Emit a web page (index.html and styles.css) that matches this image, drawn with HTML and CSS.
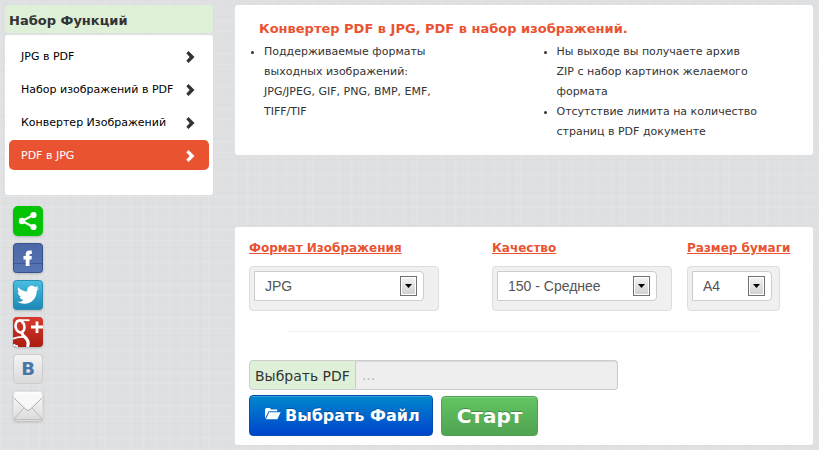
FILE: index.html
```
<!DOCTYPE html>
<html lang="ru">
<head>
    <meta charset="UTF-8">
    <meta name="viewport" content="width=device-width, initial-scale=1.0">
    <title>PDF в JPG</title>
    <link rel="stylesheet" href="styles.css">
</head>
<body>

<!-- Shared chevron and icon gradients -->
<svg class="defs" width="0" height="0" aria-hidden="true">
    <defs>
        <symbol id="chevron" viewBox="0 0 10 12">
            <path d="M2.5 0 L8.5 6 L2.5 12 L0.3 9.8 L3.7 6 L0.3 2.2 Z"/>
        </symbol>
        <linearGradient id="fbFill" x1="0" y1="0" x2="0" y2="1">
            <stop offset="0" stop-color="#4c68a6"/>
            <stop offset="1" stop-color="#5674b3"/>
        </linearGradient>
        <linearGradient id="twFill" x1="0" y1="0" x2="0" y2="1">
            <stop offset="0" stop-color="#48bfe0"/>
            <stop offset="1" stop-color="#1e86b4"/>
        </linearGradient>
        <linearGradient id="gpFill" x1="0" y1="0" x2="0" y2="1">
            <stop offset="0" stop-color="#d83a2c"/>
            <stop offset="1" stop-color="#a91d12"/>
        </linearGradient>
        <linearGradient id="grayFill" x1="0" y1="0" x2="0" y2="1">
            <stop offset="0" stop-color="#fdfdfd"/>
            <stop offset="1" stop-color="#dadada"/>
        </linearGradient>
    </defs>
</svg>

<div class="page">
    <aside class="sidebar">
        <h2 class="sidebar-title">Набор Функций</h2>
        <nav class="menu">
            <a href="#">JPG в PDF <svg class="chevron"><use href="#chevron"/></svg></a>
            <a href="#">Набор изображений в PDF <svg class="chevron"><use href="#chevron"/></svg></a>
            <a href="#">Конвертер Изображений <svg class="chevron"><use href="#chevron"/></svg></a>
            <a href="#" class="active">PDF в JPG <svg class="chevron"><use href="#chevron"/></svg></a>
        </nav>

        <div class="social">
            <a href="#" aria-label="Share">
                <svg viewBox="0 0 31 31">
                    <rect x="0" y="0" width="30" height="30" rx="5" fill="#05c405"/>
                    <path d="M20.5 9 L9 15 L20.5 21" fill="none" stroke="#fff" stroke-width="2.2"/>
                    <circle cx="20.5" cy="9" r="3.1" fill="#fff"/>
                    <circle cx="9" cy="15" r="3.2" fill="#fff"/>
                    <circle cx="20.5" cy="21" r="3.1" fill="#fff"/>
                </svg>
            </a>
            <a href="#" aria-label="Facebook">
                <svg viewBox="0 0 31 31">
                    <rect x="0.5" y="0.5" width="29" height="29" rx="3" fill="url(#fbFill)" stroke="#35528f"/>
                    <path d="M1 20.5 H29" stroke="#3c5796"/>
                    <path d="M12.7 23 V16.5 H10.5 V13 H12.7 V11.5 C12.7 8.8 14.2 7.6 16.3 7.6 H18.8 V11 H17.4 C16.7 11 16.5 11.4 16.5 12 V13 H18.8 L18.5 16.5 H16.5 V23 Z" fill="#fff"/>
                </svg>
            </a>
            <a href="#" aria-label="Twitter">
                <svg viewBox="0 0 31 31">
                    <rect x="0.5" y="0.5" width="29" height="29" rx="3" fill="url(#twFill)" stroke="#2a8db5"/>
                    <path d="M5.2 7.2 C7.5 9.8 10.6 11.3 14.4 11.6 C13.7 8.1 16 5.8 18.8 5.8 C20.2 5.8 21.4 6.3 22.3 7.3 L25.3 6.1 C25 7.3 24.3 8.2 23.3 8.9 L26 8.3 C25.4 9.3 24.6 10.1 23.7 10.8 C24 17.4 18.9 23.8 11.4 23.8 C8.9 23.8 6.4 23.1 4.3 21.8 C6.8 22 8.9 21.4 10.7 20 C8.7 19.9 7.2 18.6 6.6 16.8 L8.4 16.8 C6.2 16.1 4.7 14.3 4.8 12.1 L6.7 12.6 C4.7 11.2 4.1 9 5.2 7.2 Z" fill="#fff"/>
                </svg>
            </a>
            <a href="#" aria-label="Google Plus">
                <svg viewBox="0 0 31 31">
                    <rect x="0" y="0" width="30" height="30" rx="4" fill="url(#gpFill)"/>
                    <g fill="none" stroke="#fff">
                        <ellipse cx="7" cy="9.5" rx="4.4" ry="6" stroke-width="2.6" transform="rotate(-12 7 9.5)"/>
                        <path d="M6 3.2 H16.5" stroke-width="1.8"/>
                        <path d="M9.5 15.5 C8.5 17.5 10 18.5 12 20.2 C15.5 23 16 26 14.5 30" stroke-width="3.2"/>
                        <path d="M0 21.8 C3.5 20.2 7 19.8 11 20" stroke-width="1.8"/>
                        <path d="M0.5 27.5 C2 28.7 3.5 29.2 5 29.4" stroke-width="1.8"/>
                        <path d="M18 10 H30 M24 4.5 V16" stroke-width="2.8"/>
                    </g>
                </svg>
            </a>
            <a href="#" class="vk" aria-label="VKontakte">В</a>
            <a href="#" aria-label="Email">
                <svg viewBox="0 0 31 31">
                    <rect x="0.5" y="0.5" width="29" height="29" rx="3" fill="url(#grayFill)" stroke="#e2e2e2"/>
                    <path d="M1 28 L11 17 M29 28 L19 17" fill="none" stroke="#bbb"/>
                    <path d="M1 7 L13 18.5 Q15 20.5 17 18.5 L29 7" fill="#f8f8f8" stroke="#aaa"/>
                    <path d="M1 28.5 H29" stroke="#bdbdbd"/>
                </svg>
            </a>
        </div>
    </aside>

    <main class="content">
        <section class="panel info">
            <h1>Конвертер PDF в JPG, PDF в набор изображений.</h1>
            <div class="columns">
                <ul class="formats">
                    <li>Поддерживаемые форматы выходных изображений: JPG/JPEG, GIF, PNG, BMP, EMF, TIFF/TIF</li>
                </ul>
                <ul class="features">
                    <li>Ны выходе вы получаете архив ZIP с набор картинок желаемого формата</li>
                    <li>Отсутствие лимита на количество страниц в PDF документе</li>
                </ul>
            </div>
        </section>

        <form class="panel convert">
            <div class="options">
                <div class="option">
                    <label for="format">Формат Изображения</label>
                    <div class="well well-format">
                        <div class="select">
                            <select id="format">
                                <option>JPG</option>
                            </select>
                            <span class="arrow"></span>
                        </div>
                    </div>
                </div>
                <div class="option">
                    <label for="quality">Качество</label>
                    <div class="well well-quality">
                        <div class="select">
                            <select id="quality">
                                <option>150 - Среднее</option>
                            </select>
                            <span class="arrow"></span>
                        </div>
                    </div>
                </div>
                <div class="option">
                    <label for="paper">Размер бумаги</label>
                    <div class="well well-paper">
                        <div class="select">
                            <select id="paper">
                                <option>A4</option>
                            </select>
                            <span class="arrow"></span>
                        </div>
                    </div>
                </div>
            </div>

            <hr>

            <div class="file-group">
                <label for="file">Выбрать PDF</label>
                <input type="text" id="file" placeholder="..." readonly>
            </div>

            <div class="buttons">
                <button type="button" class="btn btn-choose">
                    <svg width="16" height="12" viewBox="0 0 16 12">
                        <path d="M0 10.5 V1.2 L1.2 0 H5 L6 1.5 H12.2 V3.2 H3.6 Z" fill="#fff"/>
                        <path d="M4.2 4.2 H15.6 L12.4 11.2 H0.9 Z" fill="#fff"/>
                    </svg>
                    Выбрать Файл
                </button>
                <button type="submit" class="btn btn-start">Старт</button>
            </div>
        </form>
    </main>
</div>

</body>
</html>
```
FILE: styles.css
```
* {
    box-sizing: border-box;
}

body {
    margin: 0;
    font-family: Verdana, "DejaVu Sans", sans-serif;
    font-size: 11px;
    line-height: 20px;
    color: #333;
    background-color: #dfe0e2;
    /* linen texture */
    background-image:
        repeating-linear-gradient(90deg, rgba(255, 255, 255, 0.1) 0 1px, transparent 1px 5px, rgba(0, 0, 0, 0.01) 5px 6px, transparent 6px 13px),
        repeating-linear-gradient(0deg, rgba(255, 255, 255, 0.1) 0 1px, transparent 1px 4px, rgba(0, 0, 0, 0.01) 4px 5px, transparent 5px 11px);
}

.defs {
    position: absolute;
}

.page {
    display: flex;
    gap: 22px;
    padding: 5px 6px 5px 5px;
}

/* Sidebar */
.sidebar {
    flex: 0 0 208px;
}

.sidebar-title {
    margin: 0 0 2px;
    padding: 6px 4px 2px;
    font-size: 13px;
    line-height: 20px;
    background-color: #dff0d8;
    border-radius: 3px;
}

.menu {
    padding: 6px 4px 25px;
    background-color: #fff;
    border-radius: 3px;
    display: flex;
    flex-direction: column;
    gap: 3px;
}

.menu a {
    display: flex;
    justify-content: space-between;
    align-items: center;
    height: 30px;
    padding: 2px 13px 0 12px;
    color: #000;
    text-decoration: none;
    white-space: nowrap;
    border-radius: 5px;
}

.menu a.active {
    color: #fff;
    background-color: #e95331;
}

.chevron {
    width: 10px;
    height: 12px;
    fill: #333;
}

.active .chevron {
    fill: #fff;
}

.social {
    display: flex;
    flex-direction: column;
    gap: 6px;
    width: 31px;
    margin: 11px 0 0 8px;
}

.social a {
    height: 31px;
}

.social svg {
    display: block;
    width: 31px;
    height: 31px;
    filter: drop-shadow(0 1px 1px rgba(0, 0, 0, 0.2));
}

.social .vk {
    width: 30px;
    height: 30px;
    margin-bottom: 1px;
    font-size: 18px;
    font-weight: bold;
    line-height: 28px;
    text-align: center;
    text-decoration: none;
    color: #4a76a8;
    background: linear-gradient(#f4f4f4, #dadada);
    border: 1px solid #ccc;
    border-radius: 4px;
}

/* Panels */
.content {
    flex: 1;
    min-width: 0;
}

.panel {
    background-color: #fff;
    border-radius: 3px;
}

.info {
    min-height: 150px;
    margin-bottom: 72px;
    padding: 14px 24px 13px;
}

.info h1 {
    margin: 0 0 3px;
    font-size: 13px;
    line-height: 20px;
    color: #e95331;
}

.columns {
    display: grid;
    grid-template-columns: 1fr 1fr;
    gap: 60px;
    margin-left: 5px;
}

.columns ul {
    margin: 0;
    padding: 0;
}

.formats {
    max-width: 190px;
}

.features {
    max-width: 203px;
}

/* Convert form */
.convert {
    padding: 11px 14px 9px;
}

.options {
    display: grid;
    grid-template-columns: 243fr 195fr 112fr;
}

.option label {
    display: block;
    margin-bottom: 8px;
    font-size: 12px;
    font-weight: bold;
    text-decoration: underline;
    white-space: nowrap;
    color: #e95331;
}

.well {
    height: 45px;
    padding: 4px;
    background-color: #f0f0f0;
    border: 1px solid #ddd;
    border-radius: 4px;
}

.well-format {
    width: 190px;
    padding-right: 14px;
}

.well-quality {
    width: 180px;
    padding-right: 14px;
}

.well-paper {
    width: 93px;
    padding-right: 7px;
}

.select {
    position: relative;
}

select {
    display: block;
    appearance: none;
    width: 100%;
    height: 30px;
    padding: 0 10px;
    font-family: "Liberation Sans", Arial, sans-serif;
    font-size: 14px;
    color: #555;
    background-color: #fff;
    border: 1px solid #ccc;
    border-radius: 0 4px 4px 0;
}

.arrow {
    position: absolute;
    top: 5px;
    right: 7px;
    width: 17px;
    height: 20px;
    padding: 7px 4px;
    background: linear-gradient(#f4f4f4, #cfcfcf);
    border: 1px solid #707070;
    box-shadow: inset 0 0 0 1px #fff;
    pointer-events: none;
}

.arrow::after {
    content: "";
    display: block;
    width: 7px;
    height: 4px;
    background-color: #000;
    clip-path: polygon(0 0, 100% 0, 50% 100%);
}

hr {
    margin: 20px 39px 28px 38px;
    border: 0;
    border-top: 1px solid #eee;
}

.file-group {
    display: flex;
    max-width: 369px;
    height: 30px;
    margin-bottom: 5px;
}

.file-group label {
    padding: 5px;
    font-size: 14px;
    white-space: nowrap;
    background-color: #dff0d8;
    border: 1px solid #ccc;
    border-radius: 4px 0 0 4px;
}

.file-group input {
    flex: 1;
    min-width: 0;
    padding: 4px 6px;
    font-family: inherit;
    font-size: 14px;
    background-color: #eee;
    border: 1px solid #ccc;
    border-left: 0;
    border-radius: 0 4px 4px 0;
    box-shadow: inset 0 1px 1px rgba(0, 0, 0, 0.08);
}

.file-group input::placeholder {
    color: #bbb;
}

.buttons {
    display: flex;
    align-items: flex-end;
    gap: 8px;
}

.btn {
    font-family: inherit;
    font-weight: bold;
    line-height: 20px;
    white-space: nowrap;
    color: #fff;
    border-radius: 4px;
    cursor: pointer;
    text-shadow: 0 -1px 0 rgba(0, 0, 0, 0.25);
    box-shadow: inset 0 1px 0 rgba(255, 255, 255, 0.2);
}

.btn-choose {
    display: flex;
    align-items: center;
    gap: 4px;
    height: 41px;
    padding: 0 12px 0 15px;
    font-size: 16px;
    background: linear-gradient(#0088cc, #0044cc);
    border: 1px solid #0350b0;
}

.btn-choose svg {
    margin-bottom: 4px;
}

.btn-start {
    height: 40px;
    padding: 0 15px;
    font-size: 20px;
    background: linear-gradient(#62c462, #51a351);
    border: 1px solid #4fa04f;
}
```
